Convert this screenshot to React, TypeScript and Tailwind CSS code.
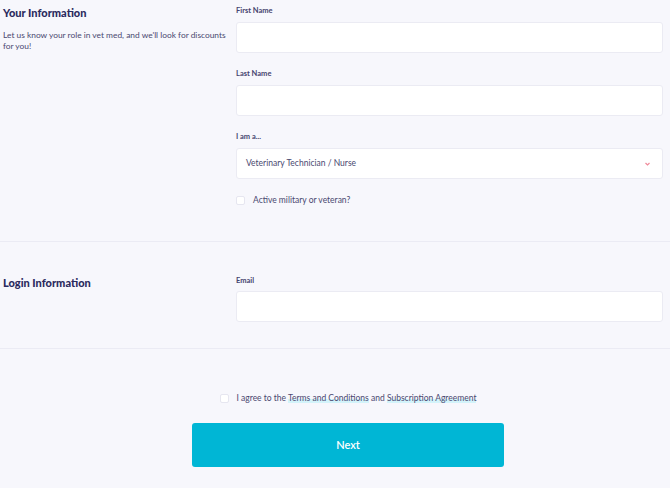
import React from "react";

const font = { fontFamily: "Lato, 'Noto Sans', sans-serif" };

function Field({ label, children }: { label: string; children?: React.ReactNode }) {
  return (
    <div className="mb-[15px]">
      <div className="text-[7.5px] font-bold leading-[12px] text-[#45436e] mb-[5px]">{label}</div>
      {children ?? (
        <input className="block w-full h-[31px] rounded-[3px] border border-[#ebebf3] bg-white outline-none" />
      )}
    </div>
  );
}

function Check({ children }: { children: React.ReactNode }) {
  return (
    <label className="flex items-center gap-[8px] text-[8.5px] text-[#4a4870]">
      <span className="block w-[9px] h-[9px] rounded-[2px] border border-[#e6e6f0] bg-white" />
      <span>{children}</span>
    </label>
  );
}

export default function App() {
  return (
    <div className="w-[670px] h-[488px] bg-[#f7f7fc] overflow-hidden" style={font}>
      {/* Your Information */}
      <section className="flex pl-[3px] pr-[7px] pt-[5px] h-[242px] border-b border-[#ebebf4]">
        <div className="w-[233px] shrink-0">
          <h2 className="text-[11px] font-black leading-[16px] text-[#2b2a5e]">Your Information</h2>
          <p className="mt-[9px] max-w-[229px] text-[8.4px] leading-[11px] text-[#4a4870]">
            Let us know your role in vet med, and we'll look for discounts for you!
          </p>
        </div>
        <div className="flex-1">
          <Field label="First Name" />
          <Field label="Last Name" />
          <Field label="I am a...">
            <div className="flex items-center justify-between h-[31px] rounded-[3px] border border-[#ebebf3] bg-white pl-[9px] pr-[12px] text-[8.5px] text-[#4a4870]">
              <span>Veterinary Technician / Nurse</span>
              <svg width="5" height="4" viewBox="0 0 5 4">
                <path d="M0.5 1 L2.5 3 L4.5 1" fill="none" stroke="#f08a9a" strokeWidth="1.2" />
              </svg>
            </div>
          </Field>
          <div className="mt-[14px]">
            <Check>Active military or veteran?</Check>
          </div>
        </div>
      </section>

      {/* Login Information */}
      <section className="flex pl-[3px] pr-[7px] pt-[33px] h-[107px] border-b border-[#ebebf4]">
        <div className="w-[233px] shrink-0">
          <h2 className="text-[11px] font-black leading-[16px] text-[#2b2a5e]">Login Information</h2>
        </div>
        <div className="flex-1">
          <div className="text-[7.5px] font-bold leading-[12px] text-[#45436e] mb-[4px]">Email</div>
          <input className="block w-full h-[31px] rounded-[3px] border border-[#ebebf3] bg-white outline-none" />
        </div>
      </section>

      {/* Agreement */}
      <section className="flex flex-col items-center pl-[26px] pt-[43px]">
        <Check>
          I agree to the{" "}
          <a className="shadow-[inset_0_-4px_0_#d3f3fa]">Terms and Conditions</a> and{" "}
          <a className="shadow-[inset_0_-4px_0_#d3f3fa]">Subscription Agreement</a>
        </Check>
        <button className="mt-[18px] w-[312px] h-[44px] rounded-[3px] bg-[#00b6d5] text-white text-[11px] font-semibold">
          Next
        </button>
      </section>
    </div>
  );
}
